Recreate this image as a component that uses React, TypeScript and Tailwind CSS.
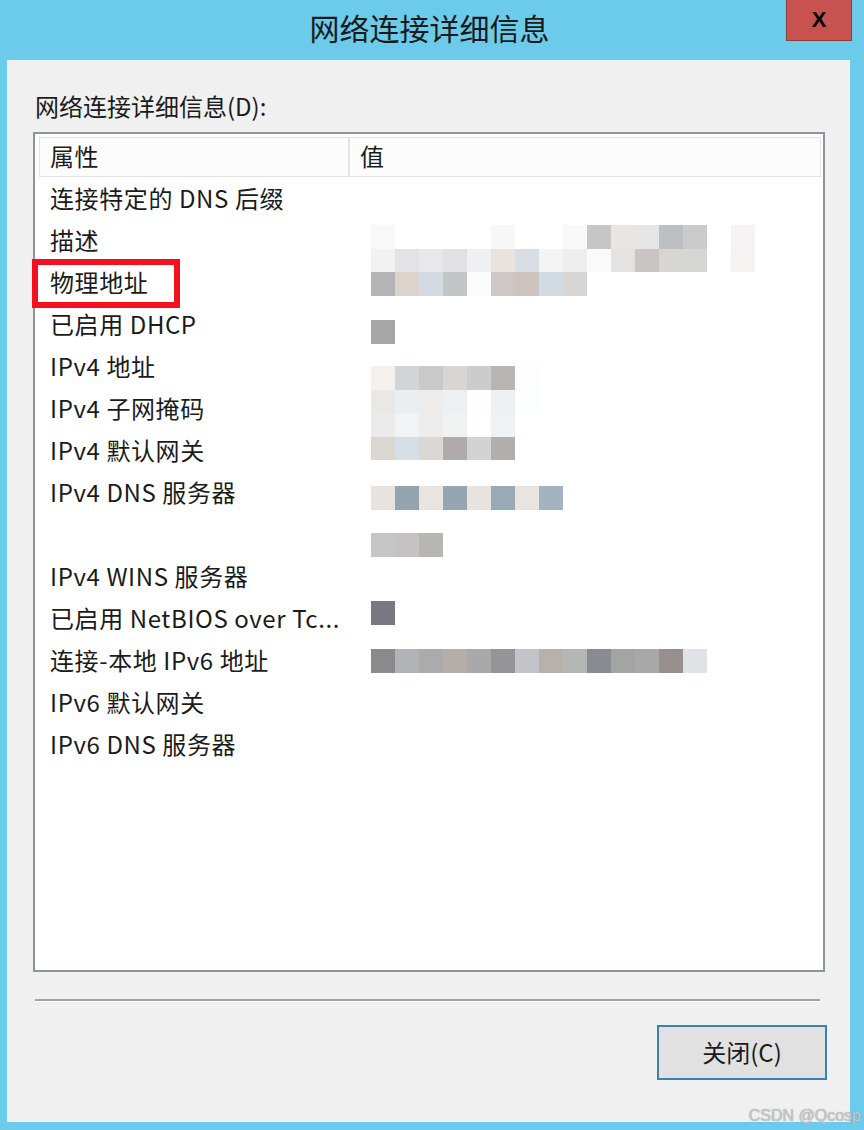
import React from "react";

type Cell = string | null;

const W = null;

const rows: { label: string; mt?: number; blocks?: Cell[][] }[] = [
  { label: "连接特定的 DNS 后缀" },
  {
    label: "描述",
    mt: 4,
    blocks: [
      ["#f9f8f6", W, W, W, W, "#f7f7f7", W, W, "#f9f9f9", "#c6c6c6", "#e8e5e3", "#e7e6e6", "#bdc0c3", "#cbcbcb", W, "#f5f3f3"],
      ["#f1f2f2", "#e3e3e5", "#e7e8ea", "#e1e1e3", "#eef0f2", "#e8e3de", "#d8dde3", "#f4f4f4", "#eeeeee", "#fafafa", "#e5e3e1", "#c9c5c4", "#d7d6d4", "#d6d6d4", W, "#f5f3f2"],
      ["#b4b3b5", "#dcd4cc", "#d4dae2", "#c2c6c9", "#fbfcfb", "#cdc7c5", "#cdc3bf", "#d2dae2", "#d8d6d5"],
    ],
  },
  { label: "物理地址" },
  { label: "已启用 DHCP", mt: 15, blocks: [["#a5a7a7"]] },
  {
    label: "IPv4 地址",
    mt: 19,
    blocks: [
      ["#f3f0ee", "#d3d4d6", "#c9c9c9", "#d8d6d3", "#cdcccc", "#b8b5b4", "#fcfdfc"],
      ["#e9e8e6", "#eaeef1", "#eeebe8", "#eceff3", "#fdfdfd", "#eef1f3", "#fcfdfd"],
      ["#ebebeb", "#f2f3f4", "#ececec", "#f0f1f1", "#ffffff", "#f0f1f2"],
      ["#dcd6d0", "#d5dde7", "#dad8d5", "#b0abaa", "#d3d3d3", "#b2aeac"],
    ],
  },
  { label: "IPv4 子网掩码" },
  { label: "IPv4 默认网关" },
  {
    label: "IPv4 DNS 服务器",
    mt: 13,
    blocks: [["#e7e3de", "#95a3af", "#e8e4df", "#97a4b1", "#e8e3de", "#9aa9b6", "#e8e4df", "#a4b3bf"]],
  },
  { label: "", mt: 18, blocks: [["#c6c6c8", "#c6c2c1", "#b7b6b2"]] },
  { label: "IPv4 WINS 服务器" },
  { label: "已启用 NetBIOS over Tc...", mt: 2, blocks: [["#787880"]] },
  {
    label: "连接-本地 IPv6 地址",
    mt: 8,
    blocks: [
      ["#8a898b", "#b0b4b7", "#ababab", "#b5aeaa", "#a9a9a9", "#959597", "#c2c4c9", "#b8b1ab", "#b5b7b6", "#8a8b90", "#a3a4a4", "#a8a8a8", "#968f8e", "#dfe3e6"],
    ],
  },
  { label: "IPv6 默认网关" },
  { label: "IPv6 DNS 服务器" },
];

function Mosaic({ blocks, mt }: { blocks: Cell[][]; mt: number }) {
  return (
    <div className="flex flex-col blur-[0.6px]" style={{ marginTop: mt }}>
      {blocks.map((r, i) => (
        <div key={i} className="flex">
          {r.map((c, j) => (
            <div
              key={j}
              className="w-[24px] h-[23.5px] shrink-0"
              style={{ backgroundColor: c ?? "transparent" }}
            />
          ))}
        </div>
      ))}
    </div>
  );
}

export default function App() {
  return (
    <div className="relative w-[864px] h-[1130px] bg-[#6ccbea] text-[#1b1b1b] font-['Microsoft_YaHei','Noto_Sans_CJK_SC','Noto_Sans',sans-serif] overflow-hidden">
      {/* Title bar */}
      <div className="h-[60px] grid grid-cols-[66px_1fr_66px] pl-[7px] pr-[12px]">
        <div />
        <div className="flex items-center justify-center text-[30px] pb-[6px] leading-none text-[#1a1a1a]">
          网络连接详细信息
        </div>
        <div className="h-[41px] bg-[#c75250] border border-[#8e3b3a] border-t-0 flex items-center justify-center">
          <span className="font-['Liberation_Sans',sans-serif] font-bold text-[22px] leading-none text-black">
            X
          </span>
        </div>
      </div>

      {/* Client area */}
      <div className="ml-[7px] mr-[14px] h-[1062px] bg-[#f0f0f0] flex flex-col">
        <div className="pl-[28px] pt-[31px] h-[72px] text-[24px] leading-[30px]">
          网络连接详细信息(D):
        </div>

        {/* List box */}
        <div className="ml-[26px] w-[792px] h-[840px] bg-white border-2 border-[#8f939a] p-[3px] pl-[4px] pr-[2px]">
          <div className="flex h-[40px] border border-[#e3e3e3] bg-[#fcfcfc] text-[24px] tracking-[0.6px]">
            <div className="w-[310px] border-r-2 border-[#e5e5e5] pl-[10px] pb-[2px] flex items-center">
              属性
            </div>
            <div className="flex-1 pl-[10px] pb-[2px] flex items-center">值</div>
          </div>
          <div className="pt-[2px] text-[24px] tracking-[0.6px]">
            {rows.map((r, i) => (
              <div key={i} className="flex h-[42px]">
                <div className="w-[312px] pl-[11px] pb-[4px] h-[42px] flex items-center whitespace-nowrap">
                  {r.label}
                </div>
                <div className="pl-[20px]">
                  {r.blocks && <Mosaic blocks={r.blocks} mt={r.mt ?? 0} />}
                </div>
              </div>
            ))}
          </div>
        </div>

        {/* Separator */}
        <div className="mt-[27px] ml-[28px] w-[785px] h-[3px] border-t-2 border-[#a3a3a3] border-b border-b-white" />

        {/* Button */}
        <div className="mt-[23px] flex justify-end pr-[23px]">
          <div className="w-[170px] h-[55px] bg-[#e1e1e1] border-2 border-[#3c7fb1] flex items-center justify-center text-[24px] pb-[2px]">
            关闭(C)
          </div>
        </div>
      </div>

      {/* Watermark */}
      <div className="absolute right-[3px] bottom-[6px] text-[16px] leading-none text-[#c9c9c9] font-['Liberation_Sans',sans-serif] [text-shadow:0_0_1px_#888]">
        CSDN @Qcosp
      </div>

      {/* Red highlight box */}
      <div className="absolute left-[32px] top-[259px] w-[148px] h-[49px] border-[6px] border-[#f5101f]" />
    </div>
  );
}
